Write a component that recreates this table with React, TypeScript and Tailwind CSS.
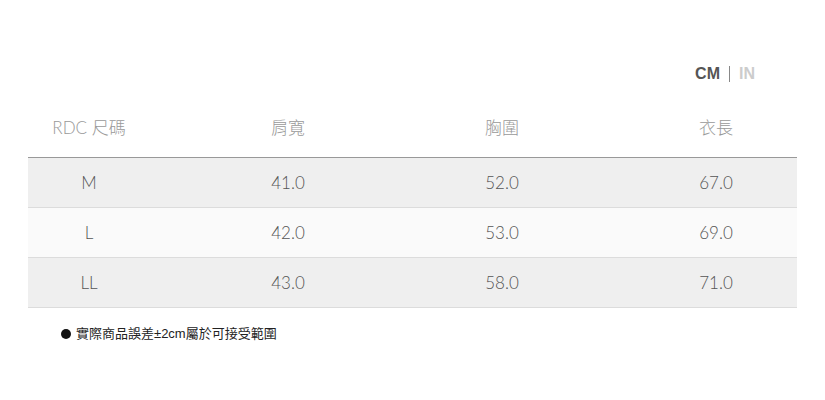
const rows = [
  { size: "M", shoulder: "41.0", chest: "52.0", length: "67.0" },
  { size: "L", shoulder: "42.0", chest: "53.0", length: "69.0" },
  { size: "LL", shoulder: "43.0", chest: "58.0", length: "71.0" },
];

const font = "font-['Lato','Noto_Sans_CJK_TC',sans-serif]";

export default function App() {
  return (
    <div className={`w-[825px] h-[400px] bg-white ${font}`}>
      <div className="pl-[28px] pr-[28px] pt-[63px]">
        <div className="flex justify-end items-center gap-[9px] pr-[42px] h-[22px] font-['Liberation_Sans',sans-serif] font-bold text-[16px]">
          <span className="text-[#555]">CM</span>
          <span className="w-px h-[16px] bg-[#888]" />
          <span className="text-[#ccc]">IN</span>
        </div>
        <div className="mt-[13px] grid grid-cols-[122px_276px_152px_1fr] h-[60px] items-center border-b border-[#999] text-[17px] font-light text-[#999]">
          <div className="text-center">RDC 尺碼</div>
          <div className="text-center">肩寬</div>
          <div className="text-center">胸圍</div>
          <div className="text-center pl-[57px]">衣長</div>
        </div>
        {rows.map((r, i) => (
          <div
            key={r.size}
            className={`grid grid-cols-[122px_276px_152px_1fr] h-[50px] items-center border-b border-[#dcdcdc] text-[17px] font-light text-[#555] ${
              i % 2 === 0 ? "bg-[#efefef]" : "bg-[#fafafa]"
            }`}
          >
            <div className="text-center">{r.size}</div>
            <div className="text-center">{r.shoulder}</div>
            <div className="text-center">{r.chest}</div>
            <div className="text-center pl-[57px]">{r.length}</div>
          </div>
        ))}
        <div className="mt-[16px] pl-[33px] flex items-center gap-[5px] text-[13px] text-[#222] font-['Liberation_Sans','Noto_Sans_CJK_TC',sans-serif]">
          <span className="w-[10px] h-[10px] rounded-full bg-[#111]" />
          <span>實際商品誤差±2cm屬於可接受範圍</span>
        </div>
      </div>
    </div>
  );
}
